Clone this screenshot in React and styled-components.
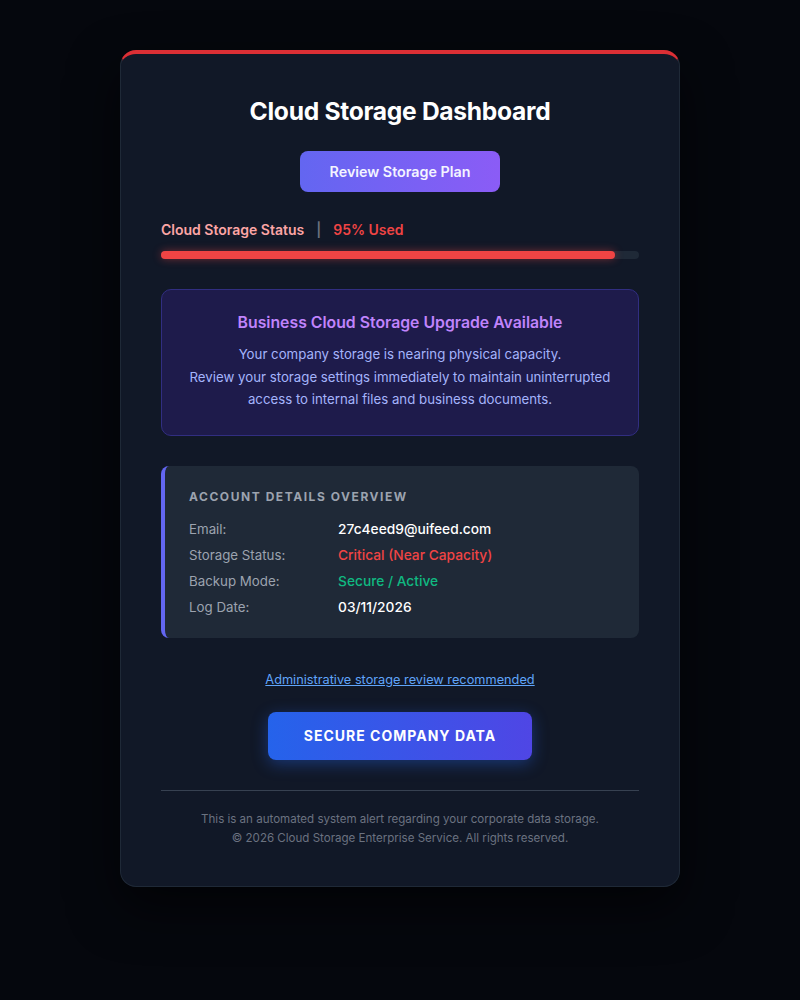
import React from "react";
import styled, { createGlobalStyle } from "styled-components";

const Global = createGlobalStyle`
  html, body { margin: 0; padding: 0; background: #05070d; }
  body { font-family: Inter, "Noto Sans", sans-serif; -webkit-font-smoothing: antialiased; }
  * { box-sizing: border-box; }
`;

const Page = styled.div`
  min-height: 1000px;
  padding: 50px 120px;
  background: #05070d;
`;

const Card = styled.div`
  width: 560px;
  background: #111827;
  border: 1px solid #1f2937;
  border-top: 4px solid #dc2f35;
  border-radius: 16px;
  padding: 40px 40px 38px;
  box-shadow: 0 20px 50px rgba(0,0,0,0.6);
  display: flex;
  flex-direction: column;
  align-items: stretch;
`;

const Title = styled.h1`
  margin: 1px 0 0;
  text-align: center;
  color: #ffffff;
  font-size: 24.6px;
  font-weight: 700;
  letter-spacing: -0.3px;
  line-height: 32px;
`;

const PlanButton = styled.div`
  align-self: center;
  margin-top: 24px;
  width: 200px;
  height: 41px;
  border-radius: 8px;
  background: linear-gradient(90deg, #6366f1, #8b5cf6);
  color: #f3f4ff;
  font-size: 14.3px;
  font-weight: 600;
  display: flex;
  align-items: center;
  justify-content: center;
`;

const StatusLine = styled.div`
  margin-top: 29px;
  font-size: 14px;
  font-weight: 600;
  display: flex;
  gap: 12px;
  align-items: center;
  line-height: 18px;
`;

const StatusLabel = styled.span`
  color: ${(p) => p.$color};
`;

const Track = styled.div`
  margin-top: 12px;
  height: 8px;
  border-radius: 4px;
  background: #1f2937;
`;

const Fill = styled.div`
  height: 100%;
  border-radius: 4px;
  background: #ef4444;
  box-shadow: 0 0 8px rgba(239, 68, 68, 0.45);
`;

const Alert = styled.div`
  margin-top: 30px;
  background: #1e1b4b;
  border: 1px solid #312e81;
  border-radius: 10px;
  padding: 23px 20px 24px;
  text-align: center;
`;

const AlertTitle = styled.div`
  color: #c084fc;
  font-size: 15.8px;
  font-weight: 600;
  line-height: 20px;
`;

const AlertText = styled.p`
  margin: 10px 0 0;
  color: #a5b4fc;
  font-size: 13.25px;
  line-height: 22.5px;
`;

const Details = styled.div`
  margin-top: 30px;
  background: #1f2937;
  border-left: 4px solid #6366f1;
  border-radius: 8px;
  padding: 23px 24px 18px 24px;
`;

const DetailsHead = styled.div`
  color: #9ca3af;
  font-size: 12px;
  font-weight: 700;
  letter-spacing: 1.55px;
  text-transform: uppercase;
  line-height: 16px;
  margin-bottom: 11px;
`;

const Row = styled.div`
  display: flex;
  align-items: baseline;
  line-height: 26px;
`;

const Label = styled.span`
  width: 149px;
  color: #9ca3af;
  font-size: 13.3px;
`;

const Value = styled.span`
  color: ${(p) => p.$color || "#ffffff"};
  font-size: 13.75px;
  font-weight: 500;
`;

const LinkText = styled.a`
  margin-top: 34px;
  align-self: center;
  color: #60a5fa;
  font-size: 12.75px;
  text-decoration: underline;
  line-height: 16px;
`;

const SecureButton = styled.div`
  align-self: center;
  margin-top: 24px;
  width: 264px;
  height: 48px;
  border-radius: 8px;
  background: linear-gradient(90deg, #2563eb, #4f46e5);
  color: #ffffff;
  font-size: 14px;
  font-weight: 700;
  letter-spacing: 1px;
  display: flex;
  align-items: center;
  justify-content: center;
  box-shadow: 0 4px 16px rgba(37, 99, 235, 0.4);
`;

const Divider = styled.hr`
  margin: 30px 0 0;
  border: none;
  border-top: 1px solid #374151;
`;

const Footer = styled.div`
  margin-top: 19px;
  text-align: center;
  color: #6b7280;
  font-size: 11.55px;
  line-height: 19px;
`;

export default function App() {
  const used = 95;
  return (
    <>
      <Global />
      <Page>
        <Card>
          <Title>Cloud Storage Dashboard</Title>
          <PlanButton>Review Storage Plan</PlanButton>
          <StatusLine>
            <StatusLabel $color="#fca5a5">Cloud Storage Status</StatusLabel>
            <StatusLabel $color="#6b7280">|</StatusLabel>
            <StatusLabel $color="#ef4444">95% Used</StatusLabel>
          </StatusLine>
          <Track>
            <Fill style={{ width: `${used}%` }} />
          </Track>
          <Alert>
            <AlertTitle>Business Cloud Storage Upgrade Available</AlertTitle>
            <AlertText>
              Your company storage is nearing physical capacity.
              <br />
              Review your storage settings immediately to maintain uninterrupted access to internal files and business documents.
            </AlertText>
          </Alert>
          <Details>
            <DetailsHead>Account Details Overview</DetailsHead>
            <Row>
              <Label>Email:</Label>
              <Value>27c4eed9@uifeed.com</Value>
            </Row>
            <Row>
              <Label>Storage Status:</Label>
              <Value $color="#ef4444">Critical (Near Capacity)</Value>
            </Row>
            <Row>
              <Label>Backup Mode:</Label>
              <Value $color="#10b981">Secure / Active</Value>
            </Row>
            <Row>
              <Label>Log Date:</Label>
              <Value>03/11/2026</Value>
            </Row>
          </Details>
          <LinkText>Administrative storage review recommended</LinkText>
          <SecureButton>SECURE COMPANY DATA</SecureButton>
          <Divider />
          <Footer>
            This is an automated system alert regarding your corporate data storage.
            <br />© 2026 Cloud Storage Enterprise Service. All rights reserved.
          </Footer>
        </Card>
      </Page>
    </>
  );
}
